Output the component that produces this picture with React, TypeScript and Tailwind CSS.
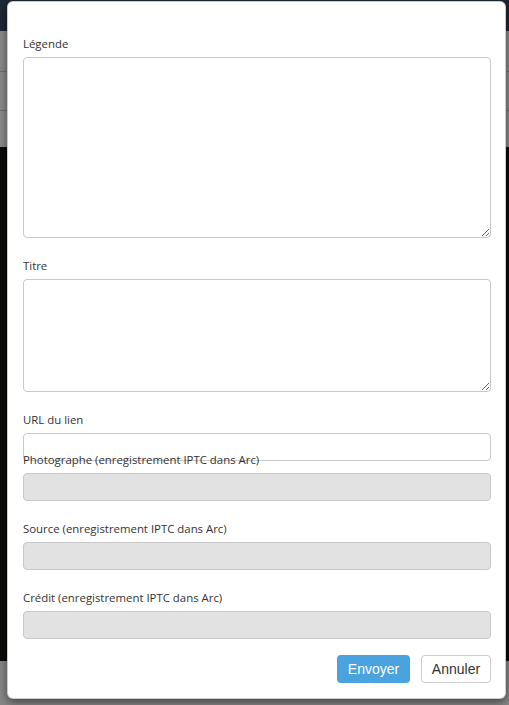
import React from "react";

function Label({ children, className = "" }: { children: React.ReactNode; className?: string }) {
  return (
    <label
      className={`block text-[11.4px] leading-[18px] text-[#333] mb-[4px] ${className}`}
      style={{ fontFamily: '"Open Sans", "Noto Sans", sans-serif' }}
    >
      {children}
    </label>
  );
}

export default function App() {
  return (
    <div className="relative w-[509px] h-[705px] overflow-hidden bg-[#0b0b0a]">
      {/* page behind */}
      <div className="flex flex-col h-full">
        <div className="h-[31px] bg-[#1c2834]" />
        <div className="h-[41px] bg-[#898989] border-b border-[#6f6f6f]" />
        <div className="h-[39px] bg-[#898989] border-b border-[#6f6f6f]" />
        <div className="h-[36px] bg-[#8a8a8a]" />
        <div className="flex-1 bg-[#0c0b09]" />
        <div className="h-[44px] bg-[#868686]" />
      </div>

      {/* modal */}
      <div className="absolute left-[7px] top-[1px] w-[499px] h-[698px] bg-white rounded-[6px] border border-black/20 shadow-[0_3px_9px_rgba(0,0,0,0.5)] px-[15px] pt-[33px]">
        <Label>Légende</Label>
        <textarea className="block w-[468px] h-[181px] border border-[#c8c8c8] rounded-[4px] bg-white" />

        <Label className="mt-[19px]">Titre</Label>
        <textarea className="block w-[468px] h-[113px] border border-[#c8c8c8] rounded-[4px] bg-white" />

        <Label className="mt-[19px]">URL du lien</Label>
        <input className="block w-[468px] h-[28px] border border-[#c8c8c8] rounded-[4px] bg-white" />

        <Label className="-mt-[10px] relative">Photographe (enregistrement IPTC dans Arc)</Label>
        <input disabled className="block w-[468px] h-[28px] border border-[#c8c8c8] rounded-[4px] bg-[#e2e2e2]" />

        <Label className="mt-[19px]">Source (enregistrement IPTC dans Arc)</Label>
        <input disabled className="block w-[468px] h-[28px] border border-[#c8c8c8] rounded-[4px] bg-[#e2e2e2]" />

        <Label className="mt-[19px]">Crédit (enregistrement IPTC dans Arc)</Label>
        <input disabled className="block w-[468px] h-[28px] border border-[#c8c8c8] rounded-[4px] bg-[#e2e2e2]" />

        <div
          className="flex justify-end gap-[11px] mt-[16px] w-[468px]"
          style={{ fontFamily: '"Liberation Sans", Arial, sans-serif' }}
        >
          <button className="h-[28px] w-[73px] rounded-[4px] bg-[#4aa3df] text-white text-[14px]">
            Envoyer
          </button>
          <button className="h-[28px] w-[70px] rounded-[4px] bg-white border border-[#cccccc] text-[#333] text-[14px]">
            Annuler
          </button>
        </div>
      </div>
    </div>
  );
}
